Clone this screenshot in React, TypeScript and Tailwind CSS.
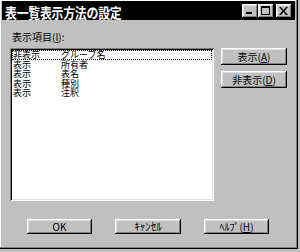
import React from 'react';

const font = { fontFamily: '"Noto Sans CJK JP", "Noto Sans", sans-serif' };

const raised =
  'bg-[#c0c0c0] shadow-[inset_-1px_-1px_#000,inset_1px_1px_#fff,inset_-2px_-2px_#808080,inset_2px_2px_#dfdfdf]';

const rows = [
  { show: '非表示', name: 'グループ名' },
  { show: '表示', name: '所有者' },
  { show: '表示', name: '表名' },
  { show: '表示', name: '種別' },
  { show: '表示', name: '注釈' },
];

function CaptionButton({ children, className = '' }: { children: React.ReactNode; className?: string }) {
  return (
    <div className={`relative h-[14px] w-[16px] ${raised} ${className}`}>{children}</div>
  );
}

function Button({ children, className = '' }: { children: React.ReactNode; className?: string }) {
  return (
    <button
      className={`flex items-center justify-center text-[10px] leading-none text-black ${raised} ${className}`}
    >
      {children}
    </button>
  );
}

export default function App() {
  return (
    <div className="h-[252px] w-[300px] overflow-hidden bg-[#c0c0c0]" style={font}>
      <div className="-ml-px -mt-px flex h-[250px] w-[299px] flex-col bg-[#c0c0c0] p-[3px] shadow-[inset_-1px_-1px_#000,inset_1px_1px_#dfdfdf,inset_-2px_-2px_#808080,inset_2px_2px_#fff]">
        {/* title bar */}
        <div className="-mt-px flex h-[19px] items-center bg-black pl-[3px] pr-[3px]">
          <div className="flex-1">
            <span className="inline-block origin-left scale-x-85 text-[14px] font-bold leading-none tracking-[-0.3px] text-white">
              表一覧表示方法の設定
            </span>
          </div>
          <CaptionButton>
            <div className="absolute left-[4px] top-[8px] h-[2px] w-[6px] bg-black" />
          </CaptionButton>
          <CaptionButton>
            <div className="absolute left-[3px] top-[2px] h-[9px] w-[9px] border border-t-2 border-black" />
          </CaptionButton>
          <CaptionButton className="ml-[2px]">
            <svg className="absolute left-[3px] top-[3px]" width="9" height="8" viewBox="0 0 9 8">
              <path d="M0 0h2l2.5 3L7 0h2L5.5 4L9 8H7L4.5 5L2 8H0l3.5-4z" fill="#000" />
            </svg>
          </CaptionButton>
        </div>

        {/* body */}
        <div className="flex flex-1 flex-col pl-[8px]">
          <div className="mt-[11px] h-[12px] pl-[2px] text-[10px] leading-[12px] text-black">
            表示項目(<span className="underline">I</span>):
          </div>
          <div className="mt-[5px] flex">
            <div className="h-[153px] w-[204px] bg-white p-[2px] shadow-[inset_1px_1px_#808080,inset_-1px_-1px_#fff,inset_2px_2px_#000,inset_-2px_-2px_#dfdfdf]">
              {rows.map((r, i) => (
                <div
                  key={i}
                  className={`flex h-[9.5px] items-center text-[9px] leading-[9.5px] text-black ${
                    i === 0 ? 'outline-1 outline-dotted outline-offset-[-1px] outline-black' : ''
                  }`}
                >
                  <span className="w-[49px] pl-[1px]">{r.show}</span>
                  <span>{r.name}</span>
                </div>
              ))}
            </div>
            <div className="ml-[7px] flex flex-col gap-[6px]">
              <Button className="h-[17px] w-[66px]">
                表示(<span className="underline">A</span>)
              </Button>
              <Button className="h-[17px] w-[66px]">
                非表示(<span className="underline">D</span>)
              </Button>
            </div>
          </div>
          <div className="mt-[18px] flex gap-[23px] pl-[17px]">
            <Button className="h-[15px] w-[65px]">OK</Button>
            <Button className="h-[15px] w-[66px] text-[11px]">ｷｬﾝｾﾙ</Button>
            <Button className="h-[15px] w-[65px]">
              ﾍﾙﾌﾟ(<span className="underline">H</span>)
            </Button>
          </div>
        </div>
      </div>
    </div>
  );
}
